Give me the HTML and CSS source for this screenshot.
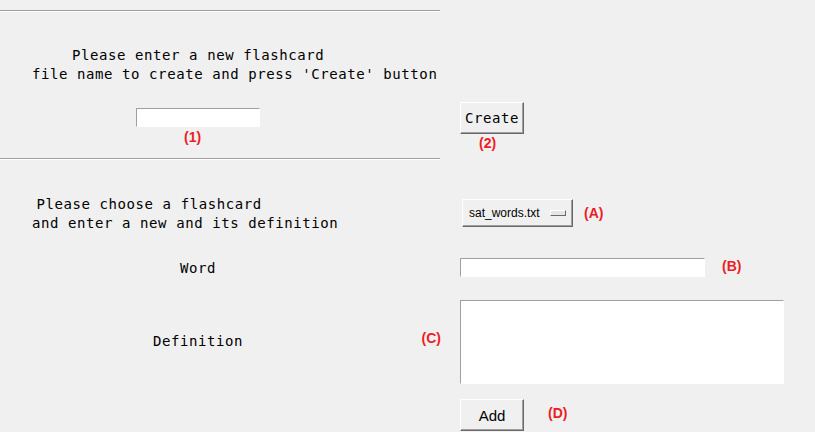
FILE: index.html
```html
<!DOCTYPE html>
<html>
<head>
<meta charset="utf-8">
<title>Flashcards</title>
<link rel="stylesheet" href="styles.css">
</head>
<body>
<div class="app">
  <div class="sep"></div>
  <div class="row row-create">
    <div class="cell-left col">
      <div class="prompt prompt-create">
        <div class="line indent-create">Please enter a new flashcard</div>
        <div class="line">file name to create and press 'Create' button</div>
      </div>
      <input class="entry entry-file" type="text">
      <div class="tag tag-1">(1)</div>
    </div>
    <div class="cell-right col">
      <button class="btn btn-create">Create</button>
      <div class="tag tag-2">(2)</div>
    </div>
  </div>
  <div class="sep"></div>
  <div class="row row-choose">
    <div class="cell-left">
      <div class="prompt prompt-choose">
        <div class="line indent-choose">Please choose a flashcard</div>
        <div class="line">and enter a new and its definition</div>
      </div>
    </div>
    <div class="cell-right">
      <button class="option">sat_words.txt<span class="indicator"></span></button>
      <div class="tag tag-a">(A)</div>
    </div>
  </div>
  <div class="row row-word">
    <div class="cell-left">
      <div class="line label-word">Word</div>
    </div>
    <div class="cell-right">
      <input class="entry entry-word" type="text">
      <div class="tag tag-b">(B)</div>
    </div>
  </div>
  <div class="row row-def">
    <div class="cell-left def-left">
      <div class="line label-def">Definition</div>
      <div class="tag tag-c">(C)</div>
    </div>
    <div class="cell-right">
      <textarea class="entry text-def"></textarea>
    </div>
  </div>
  <div class="row row-add">
    <div class="cell-left"></div>
    <div class="cell-right">
      <button class="btn btn-add">Add</button>
      <div class="tag tag-d">(D)</div>
    </div>
  </div>
</div>
</body>
</html>
```
FILE: styles.css
```css
* { box-sizing: border-box; }
html, body { margin: 0; padding: 0; }
body {
  background: #f0f0f0;
  width: 815px;
  height: 432px;
  overflow: hidden;
  font-family: "DejaVu Sans Mono", monospace;
  font-size: 14px;
  letter-spacing: 0.58px;
  color: #000;
}
.app { padding-top: 10px; }
.sep {
  width: 440px;
  height: 2px;
  border-top: 1px solid #a0a0a0;
  border-bottom: 1px solid #ffffff;
}
.row { display: flex; align-items: flex-start; }
.cell-left { width: 460px; flex: none; }
.cell-right { display: flex; align-items: flex-start; }
.col { display: flex; flex-direction: column; align-items: flex-start; }
.line { line-height: 19px; white-space: pre; }

.tag {
  font-family: "Liberation Sans", Arial, sans-serif;
  font-weight: bold;
  font-size: 14px;
  line-height: 16px;
  letter-spacing: 0;
  color: #ee1c25;
}

.entry {
  display: block;
  margin: 0;
  padding: 0;
  background: #fff;
  border: 1px solid;
  border-color: #a0a0a0 #ffffff #ffffff #a0a0a0;
  outline: none;
  resize: none;
  font: inherit;
}

.btn {
  display: flex;
  align-items: center;
  justify-content: center;
  margin: 0;
  padding: 0;
  background: #f0f0f0;
  border: 1px solid;
  border-color: #ffffff #696969 #696969 #ffffff;
  box-shadow: inset -1px -1px 0 #a0a0a0;
  color: #000;
  font: inherit;
  letter-spacing: inherit;
  line-height: 19px;
}

/* create row */
.row-create { height: 146px; }
.prompt { padding-left: 32px; }
.prompt-create { margin-top: 34px; }
.indent-create { margin-left: 40px; }
.entry-file { margin: 24px 0 0 136px; width: 124px; height: 19px; }
.tag-1 { margin: 2px 0 0 184px; }
.btn-create { margin-top: 90px; width: 64px; height: 32px; }
.tag-2 { margin: 1px 0 0 19px; }

/* choose row */
.row-choose { height: 90px; }
.prompt-choose { margin-top: 35px; }
.indent-choose { margin-left: 4.5px; }
.option {
  display: flex;
  align-items: center;
  justify-content: space-between;
  margin: 39px 0 0 2px;
  width: 111px;
  height: 28px;
  padding: 0 6px;
  background: #f0f0f0;
  border: 1px solid;
  border-color: #ffffff #696969 #696969 #ffffff;
  box-shadow: inset -1px -1px 0 #a0a0a0;
  font-family: "Liberation Sans", Arial, sans-serif;
  font-size: 12px;
  letter-spacing: 0;
  color: #000;
}
.indicator {
  width: 16px;
  height: 6px;
  margin-top: -1px;
  background: #e6e6e6;
  border: 1px solid;
  border-color: #ffffff #696969 #696969 #ffffff;
}
.tag-a { margin: 45px 0 0 11px; }

/* word row */
.row-word { height: 40px; }
.label-word { margin: 9px 0 0 180px; }
.entry-word { margin-top: 8px; width: 245px; height: 19px; }
.tag-b { margin: 8px 0 0 17px; }

/* definition row */
.row-def { height: 94px; }
.def-left { display: flex; align-items: flex-start; }
.label-def { margin: 42px 0 0 153px; }
.tag-c { margin: 40px 19px 0 auto; }
.text-def { margin-top: 10px; width: 324px; height: 84px; }

/* add row */
.btn-add {
  margin-top: 15px;
  width: 64px;
  height: 32px;
  font-family: "Liberation Sans", Arial, sans-serif;
  font-size: 15px;
  letter-spacing: 0;
}
.tag-d { margin: 21px 0 0 24px; }
```
